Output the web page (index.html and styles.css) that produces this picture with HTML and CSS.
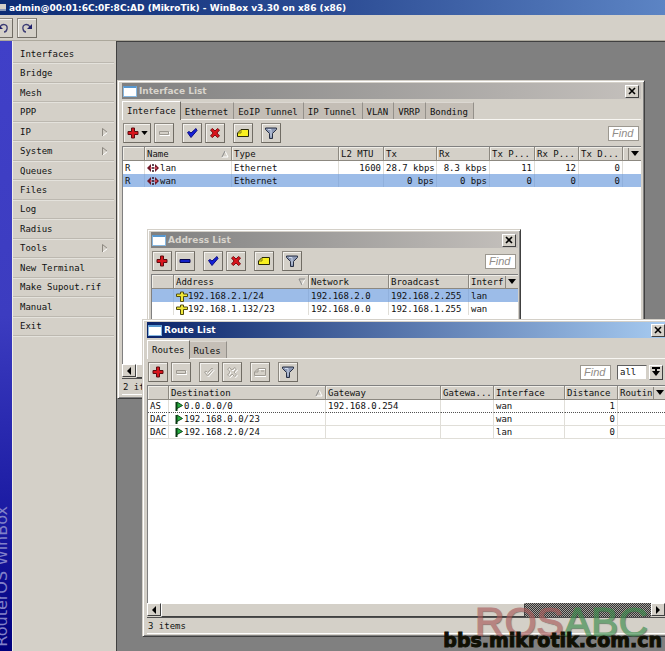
FILE: index.html
```html
<!DOCTYPE html>
<html lang="en">
<head>
<meta charset="utf-8">
<title>WinBox</title>
<link rel="stylesheet" href="styles.css">
</head>
<body>
<svg class="sprite" aria-hidden="true">
  <symbol id="plus" viewBox="0 0 12 12"><path d="M4.5 1h3v3.5H11v3H7.5V11h-3V7.500H1v-3h3.500z" fill="#d8141c" stroke="#5c0c10"/></symbol>
  <symbol id="minus" viewBox="0 0 12 12"><path d="M1 4.500h10v3H1z" fill="#1420c8" stroke="#080850"/></symbol>
  <symbol id="minus-off" viewBox="0 0 12 12"><path d="M2 5.500h10v3H2z" fill="none" stroke="#fff"/><path d="M1.500 4.500h9v3h-9z" fill="#d4d0c8" stroke="#9c9890"/></symbol>
  <symbol id="check" viewBox="0 0 12 12"><path d="M1.500 5.500l1.500-1 2 1.500 5-4.500 1 2L5 10.500z" fill="#1420d8" stroke="#0c0c80"/></symbol>
  <symbol id="check-off" viewBox="0 0 12 12"><path d="M2.500 7l1.500-1 1.500 1.500 4.500-4.500 1 1.500-5.500 6.500z" fill="none" stroke="#fff"/><path d="M1.500 6l1.500-1 1.500 1.500 4.500-4.500 1 1.500L4.500 10z" fill="none" stroke="#a8a49c"/></symbol>
  <symbol id="cross" viewBox="0 0 12 12"><path d="M1.500 3l2-1.500L6 4l2.500-2.500 2 1.500L8 6l2.500 3-2 1.500L6 8l-2.500 2.500-2-1.500L4 6z" fill="#d8141c" stroke="#801014"/></symbol>
  <symbol id="cross-off" viewBox="0 0 12 12"><path d="M2.500 4l2-1.500L7 5l2.500-2.500 2 1.500L9 7l2.500 3-2 1.500L7 9l-2.500 2.500-2-1.500L5 7z" fill="none" stroke="#fff"/><path d="M1.500 3l2-1.500L6 4l2.500-2.500 2 1.500L8 6l2.500 3-2 1.500L6 8l-2.500 2.500-2-1.500L4 6z" fill="none" stroke="#a8a49c"/></symbol>
  <symbol id="note" viewBox="0 0 12 12"><path d="M4 2.500h7.500v7H.5V6z" fill="#f8f020" stroke="#282808"/><path d="M1 6h3V3" fill="none" stroke="#807810"/></symbol>
  <symbol id="note-off" viewBox="0 0 12 12"><path d="M5 3.500h7v7H1" fill="none" stroke="#fff"/><path d="M4 2.500h7.500v7H.5V6zM1 6h3V3M7 5h3" fill="none" stroke="#a09c94"/></symbol>
  <symbol id="funnel" viewBox="0 0 12 12"><path d="M.5 1h11v1.500L7.500 6.500v5h-3v-5L.5 2.500z" fill="#8c98b4" stroke="#283044"/><path d="M3 2.500h3v7" fill="none" stroke="#ccd8ec"/></symbol>
  <symbol id="down" viewBox="0 0 8 5"><path d="M0 0h8L4 5z" fill="#000"/></symbol>
  <symbol id="left" viewBox="0 0 8 8"><path d="M6 0v8L2 4z" fill="#000"/></symbol>
  <symbol id="right" viewBox="0 0 8 8"><path d="M2 0v8l4-4z" fill="#000"/></symbol>
  <symbol id="close" viewBox="0 0 8 8"><path d="M1 1l6 6M7 1L1 7" stroke="#000" stroke-width="1.600"/></symbol>
  <symbol id="sort-up" viewBox="0 0 8 8"><path d="M4 1l3 6H1" fill="none" stroke="#fff"/><path d="M1 7l3-6" stroke="#888"/></symbol>
  <symbol id="sort-down" viewBox="0 0 8 8"><path d="M7 1L4 7" stroke="#fff"/><path d="M4 7L1 1h6" fill="none" stroke="#888"/></symbol>
  <symbol id="submenu" viewBox="0 0 6 8"><path d="M.5 8V.5l5 4" fill="none" stroke="#8c8880"/><path d="M5.500 4.500L1 8" stroke="#fff"/></symbol>
  <symbol id="ether" viewBox="0 0 12 8"><path d="M0 4l4-4v8zM12 4L8 0v8z" fill="#701828"/><path d="M3 4h1.500M7.500 4H10" stroke="#c04050" stroke-width="2"/><path d="M6 0v2M6 3v2M6 6v2" stroke="#281020" stroke-width="1.500"/></symbol>
  <symbol id="addr" viewBox="0 0 12 11"><path d="M4.500 3V1h3v2H11.500v2.500h-4V10.500h-3V5.500h-4V3z" fill="#f0e838" stroke="#504c10"/></symbol>
  <symbol id="flag" viewBox="0 0 8 10"><path d="M1.500 1v9" stroke="#083810" stroke-width="2"/><path d="M2 1l5.500 3.500L2 7.500z" fill="#28b040" stroke="#0c4818"/></symbol>
  <symbol id="undo" viewBox="0 0 12 12"><path d="M3 5c2-4 8-3 7 2-.3 1.500-1.500 3-3 3" fill="none" stroke="#3c3c74" stroke-width="1.300"/><path d="M1 2v5h5z" fill="#20206c"/></symbol>
  <symbol id="redo" viewBox="0 0 12 12"><path d="M9 5C7 1 1 2 2 7c.3 1.500 1.500 3 3 3" fill="none" stroke="#3c3c74" stroke-width="1.300"/><path d="M11 2v5H6z" fill="#20206c"/></symbol>
</svg>

<div class="app">
  <header class="app-title"><span class="app-icon"></span><h1>admin@00:01:6C:0F:8C:AD (MikroTik) - WinBox v3.30 on x86 (x86)</h1></header>
  <div class="app-tools">
    <button class="tool edge" aria-label="Undo"><svg><use href="#undo"/></svg></button>
    <button class="tool" aria-label="Redo"><svg><use href="#redo"/></svg></button>
  </div>
  <div class="workspace">
    <div class="brand"><span>RouterOS WinBox</span></div>
    <nav class="menu">
      <div class="menu-items">
        <button>Interfaces</button>
        <button>Bridge</button>
        <button>Mesh</button>
        <button>PPP</button>
        <button>IP<svg><use href="#submenu"/></svg></button>
        <button>System<svg><use href="#submenu"/></svg></button>
        <button>Queues</button>
        <button>Files</button>
        <button>Log</button>
        <button>Radius</button>
        <button>Tools<svg><use href="#submenu"/></svg></button>
        <button>New Terminal</button>
        <button>Make Supout.rif</button>
        <button>Manual</button>
        <button>Exit</button>
      </div>
    </nav>
    <main class="desktop">

      <section class="window interfaces">
        <div class="titlebar"><span class="win-icon"></span><h2>Interface List</h2><button class="raised close" aria-label="Close"><svg><use href="#close"/></svg></button></div>
        <div class="tabs">
          <button class="active">Interface</button><button>Ethernet</button><button>EoIP Tunnel</button><button>IP Tunnel</button><button>VLAN</button><button>VRRP</button><button>Bonding</button>
        </div>
        <div class="toolbar">
          <button class="tool wide" aria-label="Add"><svg><use href="#plus"/></svg><svg class="caret"><use href="#down"/></svg></button>
          <button class="tool" aria-label="Remove" disabled><svg><use href="#minus-off"/></svg></button>
          <button class="tool group" aria-label="Enable"><svg><use href="#check"/></svg></button>
          <button class="tool" aria-label="Disable"><svg><use href="#cross"/></svg></button>
          <button class="tool group" aria-label="Comment"><svg><use href="#note"/></svg></button>
          <button class="tool group" aria-label="Filter"><svg><use href="#funnel"/></svg></button>
          <input class="find" type="text" placeholder="Find" aria-label="Find">
        </div>
        <div class="list">
          <table>
            <colgroup><col class="w22"><col class="w87"><col class="w107"><col class="w45"><col class="w53"><col class="w53"><col class="w45"><col class="w44"><col class="w44"><col></colgroup>
            <thead><tr><th></th><th><span class="head">Name<svg><use href="#sort-up"/></svg></span></th><th>Type</th><th>L2 MTU</th><th>Tx</th><th>Rx</th><th>Tx P...</th><th>Rx P...</th><th>Tx D...</th><th class="pick"><span class="head"><button aria-label="Columns"><svg><use href="#down"/></svg></button></span></th></tr></thead>
            <tbody>
              <tr><td>R</td><td><svg class="ether"><use href="#ether"/></svg>lan</td><td>Ethernet</td><td class="num">1600</td><td class="num">28.7 kbps</td><td class="num">8.3 kbps</td><td class="num">11</td><td class="num">12</td><td class="num">0</td><td></td></tr>
              <tr class="selected"><td>R</td><td><svg class="ether"><use href="#ether"/></svg>wan</td><td>Ethernet</td><td></td><td class="num">0 bps</td><td class="num">0 bps</td><td class="num">0</td><td class="num">0</td><td class="num">0</td><td></td></tr>
            </tbody>
          </table>
        </div>
        <div class="scroll"><button class="raised" aria-label="Scroll left"><svg><use href="#left"/></svg></button><span class="thumb"></span><span class="track"></span><button class="raised" aria-label="Scroll right"><svg><use href="#right"/></svg></button></div>
        <div class="status">2 items</div>
      </section>

      <section class="window addresses">
        <div class="titlebar"><span class="win-icon"></span><h2>Address List</h2><button class="raised close" aria-label="Close"><svg><use href="#close"/></svg></button></div>
        <div class="toolbar">
          <button class="tool" aria-label="Add"><svg><use href="#plus"/></svg></button>
          <button class="tool" aria-label="Remove"><svg><use href="#minus"/></svg></button>
          <button class="tool group" aria-label="Enable"><svg><use href="#check"/></svg></button>
          <button class="tool" aria-label="Disable"><svg><use href="#cross"/></svg></button>
          <button class="tool group" aria-label="Comment"><svg><use href="#note"/></svg></button>
          <button class="tool group" aria-label="Filter"><svg><use href="#funnel"/></svg></button>
          <input class="find" type="text" placeholder="Find" aria-label="Find">
        </div>
        <div class="list">
          <table>
            <colgroup><col class="w22"><col class="w135"><col class="w80"><col class="w80"><col></colgroup>
            <thead><tr><th></th><th><span class="head">Address<svg><use href="#sort-down"/></svg></span></th><th>Network</th><th>Broadcast</th><th class="pick"><span class="head">Interf<button aria-label="Columns"><svg><use href="#down"/></svg></button></span></th></tr></thead>
            <tbody>
              <tr class="selected"><td></td><td><svg class="addr"><use href="#addr"/></svg>192.168.2.1/24</td><td>192.168.2.0</td><td>192.168.2.255</td><td>lan</td></tr>
              <tr><td></td><td><svg class="addr"><use href="#addr"/></svg>192.168.1.132/23</td><td>192.168.0.0</td><td>192.168.1.255</td><td>wan</td></tr>
            </tbody>
          </table>
        </div>
      </section>

      <section class="window routes">
        <div class="titlebar focused"><span class="win-icon"></span><h2>Route List</h2><button class="raised close" aria-label="Close"><svg><use href="#close"/></svg></button></div>
        <div class="tabs"><button class="active">Routes</button><button>Rules</button></div>
        <div class="toolbar">
          <button class="tool" aria-label="Add"><svg><use href="#plus"/></svg></button>
          <button class="tool" aria-label="Remove" disabled><svg><use href="#minus-off"/></svg></button>
          <button class="tool group" aria-label="Enable" disabled><svg><use href="#check-off"/></svg></button>
          <button class="tool" aria-label="Disable" disabled><svg><use href="#cross-off"/></svg></button>
          <button class="tool group" aria-label="Comment" disabled><svg><use href="#note-off"/></svg></button>
          <button class="tool group" aria-label="Filter"><svg><use href="#funnel"/></svg></button>
          <input class="find" type="text" placeholder="Find" aria-label="Find">
          <label class="combo"><select aria-label="Table"><option>all</option></select><span class="raised"><svg viewBox="0 0 8 10"><path d="M0 1h8M4 1v5" stroke="#000" stroke-width="2"/><path d="M0 4h8L4 9z"/></svg></span></label>
        </div>
        <div class="list">
          <table class="grid">
            <colgroup><col class="w21"><col class="w157"><col class="w115"><col class="w53"><col class="w71"><col class="w53"><col></colgroup>
            <thead><tr><th></th><th><span class="head">Destination<svg><use href="#sort-up"/></svg></span></th><th>Gateway</th><th>Gatewa...</th><th>Interface</th><th>Distance</th><th class="pick"><span class="head">Routin<button aria-label="Columns"><svg><use href="#down"/></svg></button></span></th></tr></thead>
            <tbody>
              <tr class="current"><td>AS</td><td><svg class="flag"><use href="#flag"/></svg>0.0.0.0/0</td><td>192.168.0.254</td><td></td><td>wan</td><td class="num">1</td><td></td></tr>
              <tr><td>DAC</td><td><svg class="flag"><use href="#flag"/></svg>192.168.0.0/23</td><td></td><td></td><td>wan</td><td class="num">0</td><td></td></tr>
              <tr><td>DAC</td><td><svg class="flag"><use href="#flag"/></svg>192.168.2.0/24</td><td></td><td></td><td>lan</td><td class="num">0</td><td></td></tr>
            </tbody>
          </table>
        </div>
        <div class="scroll"><button class="raised" aria-label="Scroll left"><svg><use href="#left"/></svg></button><span class="thumb"></span><span class="track"></span><button class="raised" aria-label="Scroll right"><svg><use href="#right"/></svg></button></div>
        <div class="status">3 items</div>
      </section>
    </main>
  </div>
  <div class="logo"><span class="ros">ROS</span><span class="abc">ABC</span></div>
  <div class="site">bbs.mikrotik.com.cn</div>
</div>
</body>
</html>
```
FILE: styles.css
```css
* { box-sizing: border-box; }
body { margin: 0; overflow: hidden; font: 9px/12px "DejaVu Sans Mono", "Liberation Mono", monospace; color: #101010; }
button, input, select { font: inherit; color: inherit; margin: 0; padding: 0; border: 0; background: none; }
h1, h2 { margin: 0; font: bold 9px/14px "DejaVu Sans", "Open Sans", sans-serif; white-space: nowrap; }
svg { display: block; flex: none; }
.sprite { position: absolute; width: 0; height: 0; }

.app { position: relative; display: flex; flex-direction: column; height: 100vh; overflow: hidden; background: #d4d0c8; }
.app-title { display: flex; align-items: center; gap: 3px; height: 15px; flex: none; color: #fff; background: linear-gradient(90deg, #0c2c74, #2c4c94 50%, #5c84c4); }
.app-icon { width: 6px; height: 7px; flex: none; background: #d4d0c8; border-bottom: 2px solid #8898b8; }
.app-tools { display: flex; align-items: center; gap: 4px; height: 26px; flex: none; border-bottom: 1px solid #aca89c; }
.workspace { display: flex; flex: 1; min-height: 0; }

.tool { display: flex; align-items: center; justify-content: center; width: 20px; height: 20px; flex: none; border: 1px solid; border-color: #8c8880 #706c64 #706c64 #8c8880; box-shadow: inset 1px 1px #f4f2ee; }
.tool svg { width: 12px; height: 12px; }
.tool.edge { width: 13px; border-left: 0; justify-content: flex-end; padding-right: 3px; box-shadow: inset 0 1px #f4f2ee; }
.tool.wide { width: 28px; gap: 2px; }
.tool .caret { width: 7px; height: 4px; }
.tool.group { margin-left: 5px; }

.brand { position: relative; width: 12px; flex: none; overflow: hidden; background: linear-gradient(#4040c8, #3c3cc0 45%, #1818a0 80%, #00007c); }
.brand span { position: absolute; right: 1px; bottom: 4px; writing-mode: vertical-rl; transform: rotate(180deg); white-space: nowrap; font: 16px/18px "DejaVu Sans", sans-serif; color: #8080c8; }

.menu { width: 104px; flex: none; padding-top: 3px; border-left: 1px solid #f0eee8; }
.menu-items { display: grid; grid-auto-rows: 1fr; height: 292px; }
.menu button { display: flex; align-items: center; justify-content: space-between; padding: 1px 6px 0 7px; margin-right: 2px; text-align: left; border-bottom: 1px solid #bcb8b0; box-shadow: 0 1px #e4e2dc; }
.menu svg { width: 6px; height: 8px; }

.desktop { position: relative; flex: 1; overflow: hidden; background: #808080; border-left: 1px solid #404040; border-top: 1px solid #404040; }

.window { position: absolute; display: flex; flex-direction: column; padding: 2px; background: #d4d0c8; border: 1px solid; border-color: #d4d0c8 #404040 #404040 #d4d0c8; box-shadow: inset 1px 1px #fff, inset -1px -1px #808080; }
.interfaces { left: 0; top: 38px; right: 20px; height: 319px; padding: 2px 3px 3px 4px; }
.addresses { left: 30px; top: 187px; width: 374px; height: 120px; padding-left: 3px; }
.routes { left: 25px; top: 277px; right: -3px; bottom: 14px; padding-left: 4px; }

.titlebar { display: flex; align-items: center; gap: 2px; height: 16px; flex: none; padding: 0 2px 0 1px; color: #d8d4cc; background: linear-gradient(90deg, #808080, #c4c0bc); }
.titlebar.focused { color: #fff; background: linear-gradient(90deg, #0a246a, #a6caf0); }
.titlebar.focused .close { margin-right: -2px; }
.win-icon { width: 14px; height: 11px; flex: none; background: #fff; border: 1px solid #88b8e0; border-top: 2px solid #5898d0; }
.raised { display: flex; align-items: center; justify-content: center; flex: none; width: 14px; height: 13px; background: #d4d0c8; border: 1px solid; border-color: #fff #404040 #404040 #fff; }
.raised svg { width: 8px; height: 8px; }
.close { margin-left: auto; }

.tabs { display: flex; align-items: flex-end; height: 21px; flex: none; padding-top: 2px; border-bottom: 1px solid #f8f6f2; }
.tabs button { height: 17px; padding: 2px 5px 0 4px; background: #c4beb6; border-right: 1px solid #94908a; border-top: 1px solid #dcd8d2; white-space: nowrap; }
.tabs .active { height: 19px; padding: 0 4px; margin-bottom: -1px; background: #d4d0c8; border-left: 1px solid #fff; border-top-color: #fff; border-right-color: #706c64; }

.toolbar { display: flex; align-items: center; gap: 3px; height: 26px; flex: none; padding: 0 2px 0 1px; }
.find { width: 31px; height: 15px; margin-left: auto; padding: 0 3px; background: #fff; border: 1px solid #9c9890; font: italic 11px/13px "Liberation Sans", sans-serif; }
.find::placeholder { color: #908c88; opacity: 1; }
.combo { display: flex; align-items: center; gap: 2px; margin-left: 3px; }
.combo select { appearance: none; width: 30px; height: 15px; padding: 0 2px; background: #fff; border: 1px solid; border-color: #606060 #d4d0c8 #d4d0c8 #606060; border-radius: 0; }
.combo .raised { width: 14px; height: 15px; }
.combo svg { height: 10px; }

.list { flex: 1; min-height: 0; overflow: hidden; background: #fff; border-top: 1px solid #808080; border-left: 1px solid #808080; }
table { width: 100%; table-layout: fixed; border-collapse: separate; border-spacing: 0; }
th, td { height: 13px; padding: 0 2px; text-align: left; font-weight: normal; line-height: 12px; white-space: nowrap; overflow: hidden; border-right: 1px solid #e0ded8; }
th { height: 14px; background: #d4d0c8; border-right-color: #8c8880; border-bottom: 1px solid #8c8880; box-shadow: inset 1px 1px #f0eee8; }
.head { display: flex; align-items: center; justify-content: space-between; overflow: hidden; }
.head svg { width: 8px; height: 8px; }
.head button { display: flex; align-items: center; justify-content: center; width: 13px; height: 12px; margin-left: auto; flex: none; background: #d4d0c8; border-left: 1px solid #8c8880; }
.head button svg { width: 8px; height: 5px; }
.pick { padding-right: 0; border-right: 0; }
td svg { display: inline-block; vertical-align: middle; }
td:last-child { border-right: 0; }
.ether { width: 12px; height: 8px; margin-right: 1px; }
.addr { width: 12px; height: 11px; }
.flag { width: 8px; height: 10px; margin: 0 1px 0 4px; }
.num { text-align: right; }
.selected td { background: #9cbce8; border-right-color: #90b0dc; }
.grid td { border-bottom: 1px solid #e0ded8; line-height: 11px; }
.grid .current td { border-bottom: 1px dotted #505050; }

.w21 { width: 21px; } .w22 { width: 22px; } .w44 { width: 44px; } .w45 { width: 45px; }
.w53 { width: 53px; } .w71 { width: 71px; } .w80 { width: 80px; } .w87 { width: 87px; }
.w107 { width: 107px; } .w115 { width: 115px; } .w135 { width: 135px; } .w157 { width: 157px; }

.scroll { display: flex; height: 14px; flex: none; }
.thumb { flex: 361; background: #d4d0c8; border: 1px solid; border-color: #fff #404040 #404040 #fff; }
.track { flex: 126; background: repeating-conic-gradient(#343434 0 25%, #a4a09c 0 50%) 0 0 / 2px 2px; }
.status { height: 17px; flex: none; padding: 2px 1px; border-top: 1px solid #505050; border-bottom: 1px solid #fff; }

.logo { position: absolute; right: 17px; bottom: 6px; font: 41px/46px "Liberation Sans", sans-serif; opacity: .65; pointer-events: none; -webkit-text-stroke: 1px; text-shadow: 1px 1px 1px #404040; }
.ros { color: #a85c5c; }
.abc { color: #3c8c4c; }
.site { position: absolute; right: 3px; bottom: 1px; font: bold 19px/20px "DejaVu Sans", sans-serif; color: #101004; -webkit-text-stroke: 1px #101004; pointer-events: none; }
```
